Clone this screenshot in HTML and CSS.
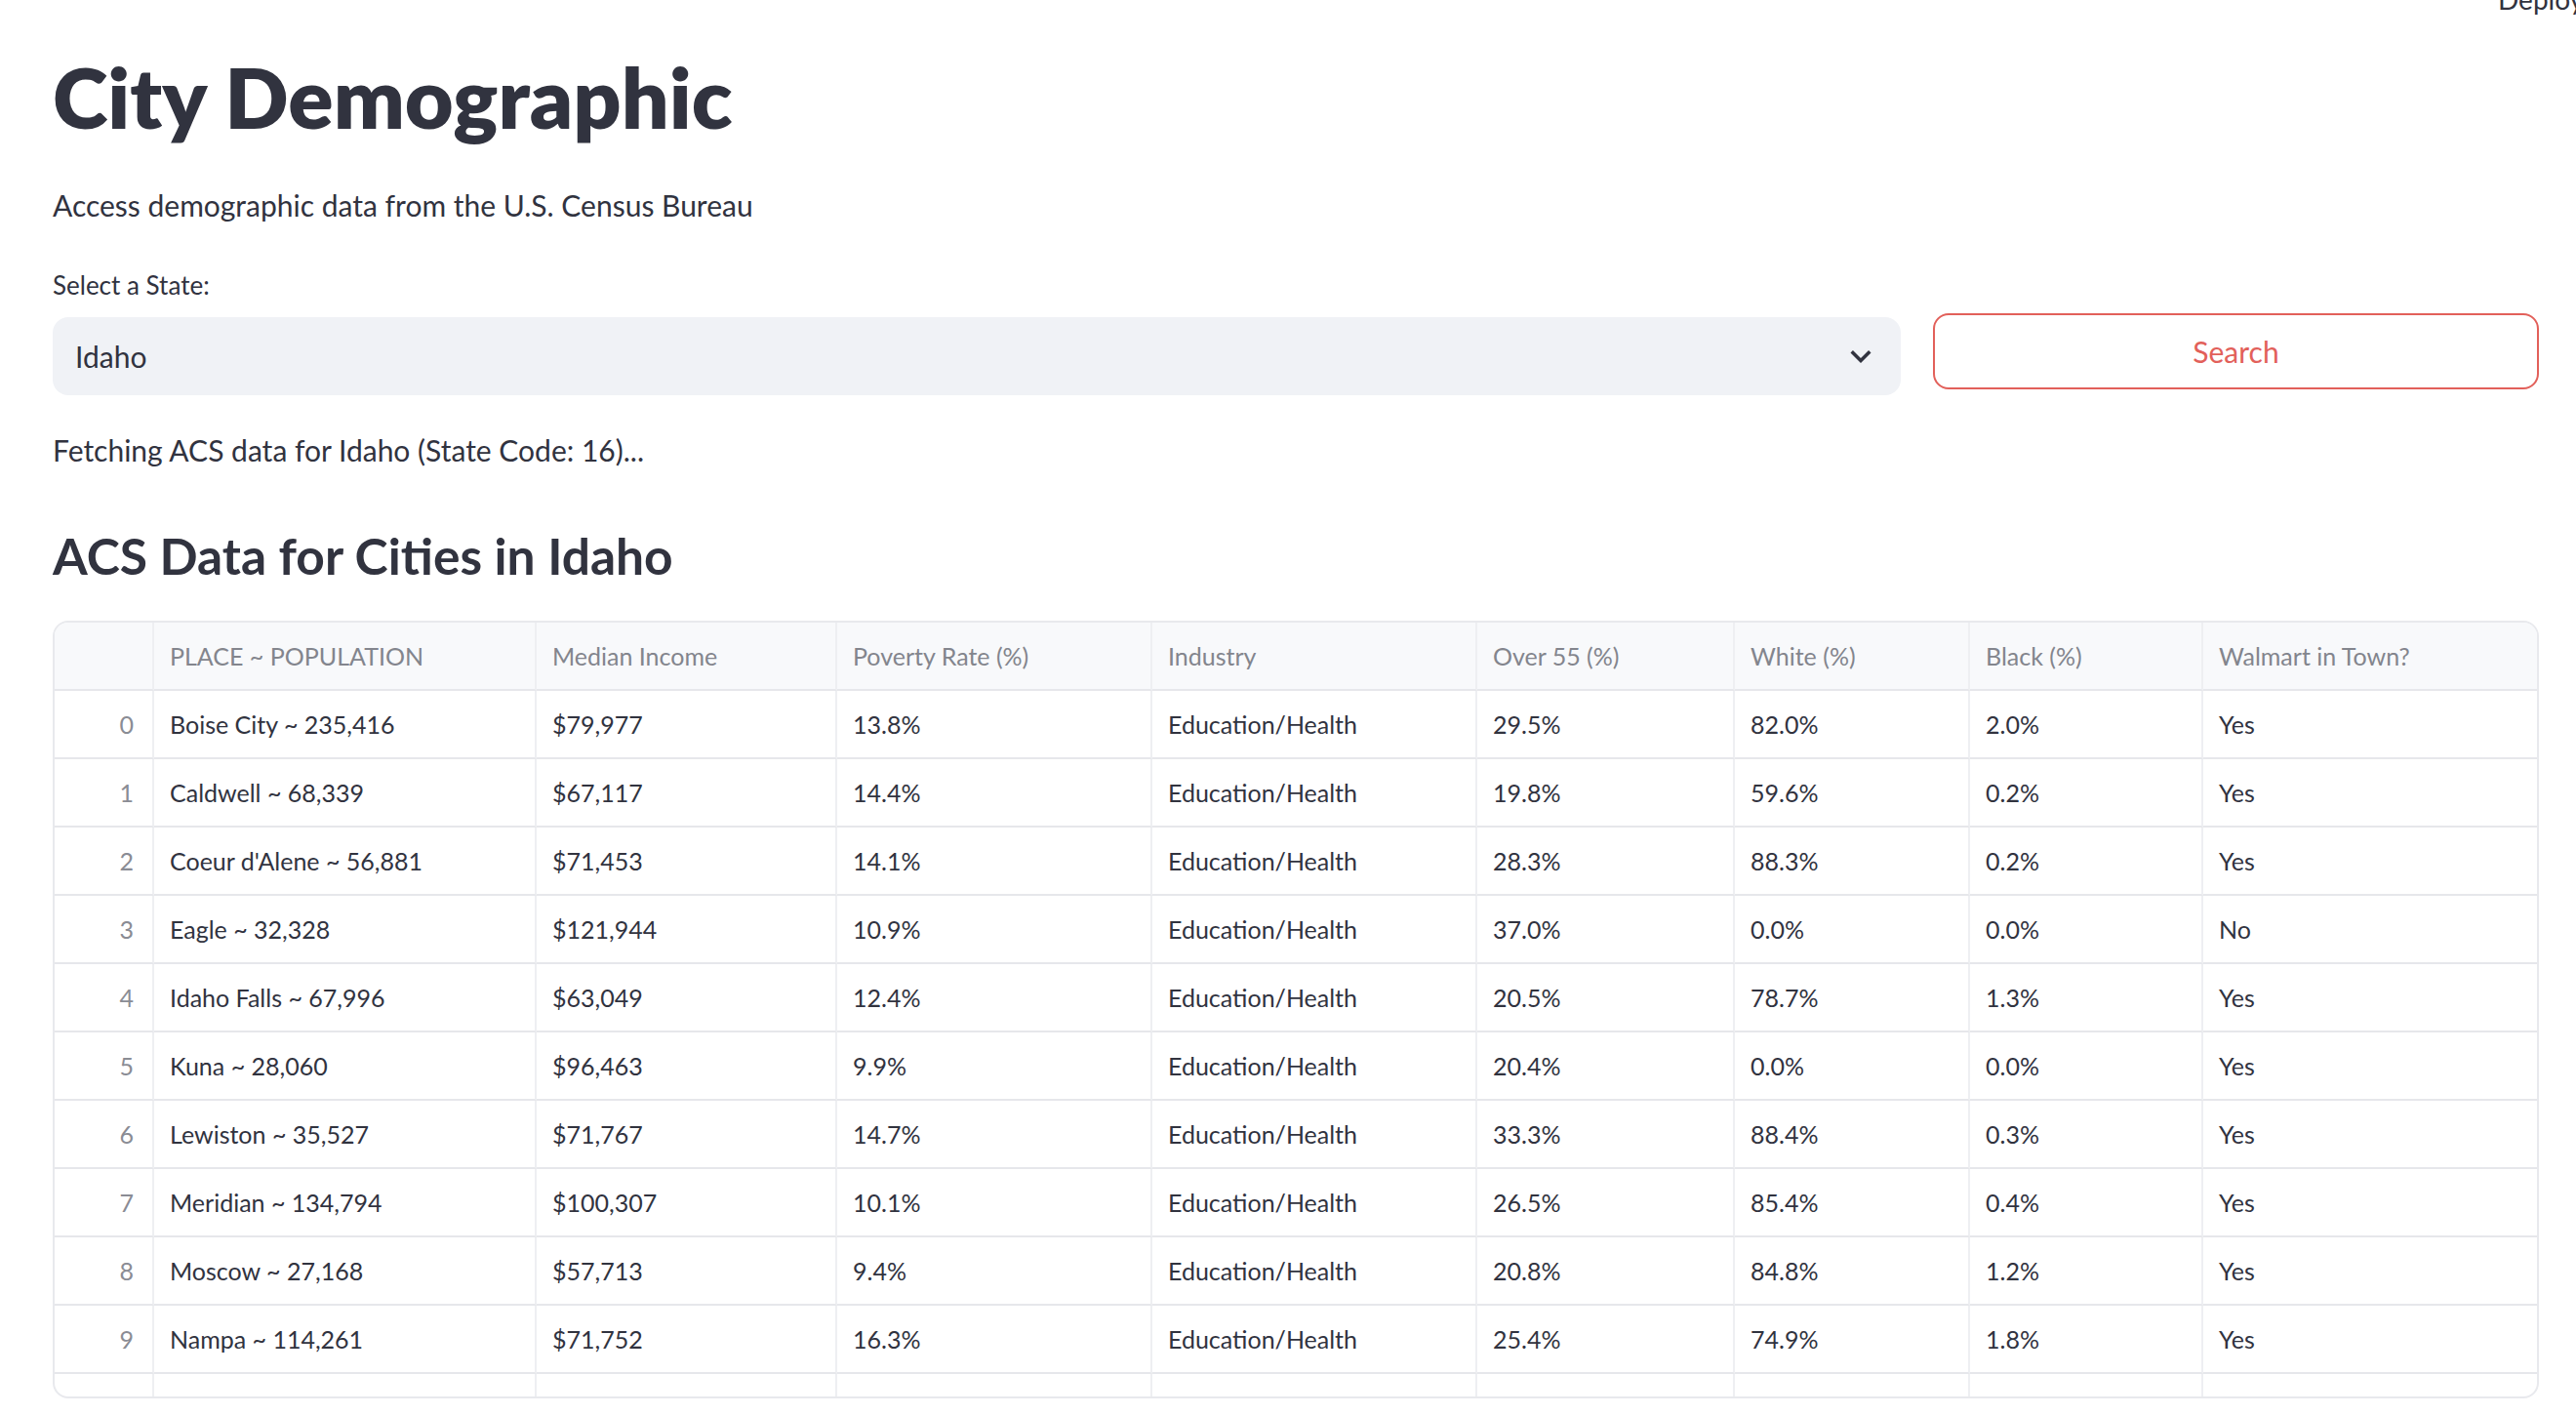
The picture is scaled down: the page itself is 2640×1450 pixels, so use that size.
FILE: index.html
```html
<!DOCTYPE html>
<html lang="en">
<head>
<meta charset="utf-8">
<title>City Demographic</title>
<link rel="stylesheet" href="styles.css">
</head>
<body>
<header class="toolbar"><span class="deploy">Deploy</span></header>
<main class="page">
  <h1 class="title">City Demographic</h1>
  <p class="lead">Access demographic data from the U.S. Census Bureau</p>

  <div class="controls">
    <div class="select-col">
      <label class="field-label">Select a State:</label>
      <div class="select-box">
        <span class="select-value">Idaho</span>
        <svg class="chevron" viewBox="0 0 24 24" aria-hidden="true"><path d="M16.59 8.59L12 13.17 7.41 8.59 6 10l6 6 6-6z"/></svg>
      </div>
    </div>
    <button class="search-btn">Search</button>
  </div>

  <p class="status">Fetching ACS data for Idaho (State Code: 16)...</p>

  <h3 class="subtitle">ACS Data for Cities in Idaho</h3>

  <div class="grid-wrap">
    <table class="grid">
      <colgroup>
        <col class="c-idx"><col class="c-place"><col class="c-inc"><col class="c-pov"><col class="c-ind"><col class="c-o55"><col class="c-wh"><col class="c-bl"><col class="c-wm">
      </colgroup>
      <thead>
        <tr><th></th><th>PLACE ~ POPULATION</th><th>Median Income</th><th>Poverty Rate (%)</th><th>Industry</th><th>Over 55 (%)</th><th>White (%)</th><th>Black (%)</th><th>Walmart in Town?</th></tr>
      </thead>
      <tbody>
        <tr><td class="idx">0</td><td>Boise City ~ 235,416</td><td>$79,977</td><td>13.8%</td><td>Education/Health</td><td>29.5%</td><td>82.0%</td><td>2.0%</td><td>Yes</td></tr>
        <tr><td class="idx">1</td><td>Caldwell ~ 68,339</td><td>$67,117</td><td>14.4%</td><td>Education/Health</td><td>19.8%</td><td>59.6%</td><td>0.2%</td><td>Yes</td></tr>
        <tr><td class="idx">2</td><td>Coeur d'Alene ~ 56,881</td><td>$71,453</td><td>14.1%</td><td>Education/Health</td><td>28.3%</td><td>88.3%</td><td>0.2%</td><td>Yes</td></tr>
        <tr><td class="idx">3</td><td>Eagle ~ 32,328</td><td>$121,944</td><td>10.9%</td><td>Education/Health</td><td>37.0%</td><td>0.0%</td><td>0.0%</td><td>No</td></tr>
        <tr><td class="idx">4</td><td>Idaho Falls ~ 67,996</td><td>$63,049</td><td>12.4%</td><td>Education/Health</td><td>20.5%</td><td>78.7%</td><td>1.3%</td><td>Yes</td></tr>
        <tr><td class="idx">5</td><td>Kuna ~ 28,060</td><td>$96,463</td><td>9.9%</td><td>Education/Health</td><td>20.4%</td><td>0.0%</td><td>0.0%</td><td>Yes</td></tr>
        <tr><td class="idx">6</td><td>Lewiston ~ 35,527</td><td>$71,767</td><td>14.7%</td><td>Education/Health</td><td>33.3%</td><td>88.4%</td><td>0.3%</td><td>Yes</td></tr>
        <tr><td class="idx">7</td><td>Meridian ~ 134,794</td><td>$100,307</td><td>10.1%</td><td>Education/Health</td><td>26.5%</td><td>85.4%</td><td>0.4%</td><td>Yes</td></tr>
        <tr><td class="idx">8</td><td>Moscow ~ 27,168</td><td>$57,713</td><td>9.4%</td><td>Education/Health</td><td>20.8%</td><td>84.8%</td><td>1.2%</td><td>Yes</td></tr>
        <tr><td class="idx">9</td><td>Nampa ~ 114,261</td><td>$71,752</td><td>16.3%</td><td>Education/Health</td><td>25.4%</td><td>74.9%</td><td>1.8%</td><td>Yes</td></tr>
        <tr><td class="idx">10</td><td>Pocatello ~ 56,107</td><td>$57,927</td><td>15.4%</td><td>Education/Health</td><td>26.1%</td><td>86.5%</td><td>0.7%</td><td>Yes</td></tr>
      </tbody>
    </table>
  </div>
</main>
</body>
</html>
```

FILE: styles.css
```css
html, body {
  margin: 0;
  padding: 0;
  background: #ffffff;
  overflow: hidden;
}

body {
  font-family: Lato, "Noto Sans", sans-serif;
  color: #31333f;
  position: relative;
  width: 2640px;
  height: 1450px;
}

.toolbar {
  position: absolute;
  top: 0;
  left: 0;
  right: 0;
  height: 0;
}

.deploy {
  position: absolute;
  top: -18px;
  left: 2560px;
  font-size: 28px;
  line-height: 34px;
  white-space: nowrap;
  color: #31333f;
}

.page {
  padding: 49px 0 0 54px;
  width: 2548px;
}

.title {
  margin: 0;
  font-size: 86px;
  line-height: 100px;
  font-weight: 800;
  color: #31333f;
}

.lead {
  margin: 41px 0 0;
  font-size: 30px;
  line-height: 40px;
}

.controls {
  margin-top: 45px;
  display: flex;
  align-items: flex-end;
  gap: 33px;
}

.select-col {
  flex: 1;
  display: flex;
  flex-direction: column;
}

.field-label {
  font-size: 26px;
  line-height: 34px;
  margin-bottom: 16px;
}

.select-box {
  height: 80px;
  background: #f0f2f6;
  border-radius: 16px;
  display: flex;
  align-items: center;
  justify-content: space-between;
  padding: 0 20px 0 23px;
}

.select-value {
  font-size: 30px;
  line-height: 80px;
}

.chevron {
  width: 42px;
  height: 42px;
  fill: #31333f;
}

.search-btn {
  width: 621px;
  height: 78px;
  margin-bottom: 6px;
  box-sizing: border-box;
  border: 2px solid #e2605a;
  border-radius: 16px;
  background: #ffffff;
  color: #e2605a;
  font-family: Lato, "Noto Sans", sans-serif;
  font-size: 30px;
  line-height: 72px;
  padding: 0;
}

.status {
  margin: 36px 0 0;
  font-size: 30px;
  line-height: 40px;
}

.subtitle {
  margin: 56px 0 0;
  font-size: 51.5px;
  line-height: 64px;
  font-weight: 700;
}

.grid-wrap {
  margin-top: 35px;
  height: 797px;
  box-sizing: border-box;
  border: 2px solid #e8e9ed;
  border-radius: 16px;
  overflow: hidden;
}

.grid {
  border-collapse: separate;
  border-spacing: 0;
  table-layout: fixed;
  width: 2544px;
  font-size: 25px;
}

.c-idx { width: 102px; }
.c-place { width: 392px; }
.c-inc { width: 308px; }
.c-pov { width: 323px; }
.c-ind { width: 333px; }
.c-o55 { width: 264px; }
.c-wh { width: 241px; }
.c-bl { width: 239px; }
.c-wm { width: 342px; }

.grid th,
.grid td {
  box-sizing: border-box;
  height: 70px;
  padding: 0 16px;
  line-height: 68px;
  text-align: left;
  white-space: nowrap;
  overflow: hidden;
  border-bottom: 2px solid #e6e7eb;
  border-right: 2px solid #eeeff2;
}

.grid th:last-child,
.grid td:last-child {
  border-right: none;
}

.grid th {
  background: #f8f9fb;
  font-weight: 400;
  color: #83858d;
}

.grid td {
  color: #31333f;
}

.grid td.idx {
  text-align: right;
  padding-right: 19px;
  color: #8a8c94;
}
```
